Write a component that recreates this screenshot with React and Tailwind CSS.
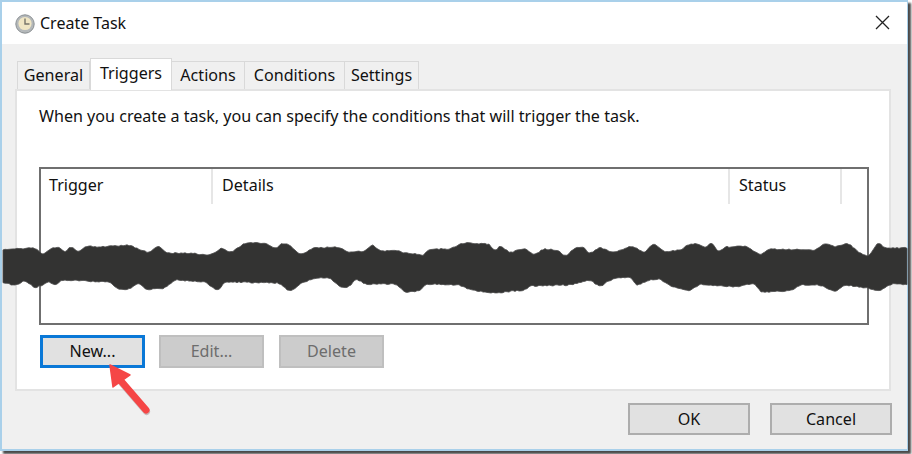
import React from 'react';

const topEdge = "3,250 8,249 35,248 43,255 52,248 60,247 64,253 71,246 79,253 85,246 100,247 130,245 140,250 150,253 158,245 167,253 190,253 205,255 215,253 222,247 230,253 245,243 265,243 275,249 282,243 290,245 300,255 313,248 340,247 347,252 365,251 372,244 380,251 395,250 405,253 425,255 428,249 450,249 462,243 490,244 495,252 500,245 510,253 524,248 535,255 543,249 558,250 565,257 575,248 583,247 590,254 600,247 612,253 632,246 645,253 653,243 665,252 680,250 690,244 700,244 705,248 712,242 718,253 725,247 745,246 760,255 770,249 815,250 825,243 835,247 848,243 860,253 868,257 878,242 885,248 908,248";
const bottomEdge = "3,282 15,286 25,280 35,288 42,285 50,281 55,287 60,280 110,282 118,290 130,289 140,282 145,290 165,288 175,280 205,282 218,291 225,282 280,283 290,292 300,284 315,278 330,278 340,287 350,287 355,278 365,284 395,284 405,292 420,291 425,284 460,285 470,290 495,293 525,290 530,286 570,285 590,280 600,287 610,280 620,278 632,277 635,286 650,280 660,279 672,287 690,291 700,284 735,287 755,283 760,292 790,291 800,285 820,285 835,292 845,285 868,288 880,291 890,284 908,285";

// resample the traced edge, round it off a little, then roughen it like torn paper
function roughen(edge, seed) {
  const pts = edge.split(' ').map((p) => p.split(',').map(Number));
  const ys = [];
  let seg = 0;
  for (let x = 3; x <= 908; x += 2) {
    while (seg < pts.length - 2 && pts[seg + 1][0] < x) seg++;
    const [x0, y0] = pts[seg];
    const [x1, y1] = pts[seg + 1];
    ys.push(y0 + ((y1 - y0) * (x - x0)) / (x1 - x0));
  }
  return ys.map((_, i) => {
    const near = ys.slice(Math.max(0, i - 1), i + 2);
    const avg = near.reduce((a, b) => a + b, 0) / near.length;
    const noise = Math.sin(i * 12.9898 + seed) * 43758.5453;
    return [3 + i * 2, (avg + (noise - Math.floor(noise)) * 1.2 - 0.6).toFixed(1)];
  });
}

const top = roughen(topEdge, 1);
const bottom = roughen(bottomEdge, 7).reverse();
const wave = [...top, ...bottom].map((p) => p.join(',')).join(' ');

const tabs = [
  { label: 'General', w: 'w-[73px]' },
  { label: 'Triggers', w: 'w-[82px]', active: true },
  { label: 'Actions', w: 'w-[74px]' },
  { label: 'Conditions', w: 'w-[101px]' },
  { label: 'Settings', w: 'w-[75px]' },
];

const columns = [
  { label: 'Trigger', w: 'w-[172px] pl-[8px]' },
  { label: 'Details', w: 'w-[517px] pl-[9px]' },
  { label: 'Status', w: 'w-[112px] pl-[9px]' },
];

function Tab({ label, w, active }) {
  if (active) {
    return (
      <div className={`${w} h-[32px] -mb-px flex items-start justify-center pt-[2px] bg-white border border-b-0 border-[#d9d9d9] z-10`}>
        {label}
      </div>
    );
  }
  return (
    <div className={`${w} h-[28px] flex items-center justify-center bg-[#f0f0f0] border border-b-0 border-[#d9d9d9] -ml-px`}>
      {label}
    </div>
  );
}

function ClockIcon() {
  return (
    <svg width="20" height="20" viewBox="0 0 20 20" className="shrink-0 mt-[2px]">
      <circle cx="10" cy="10" r="9.2" fill="#b4b8ba" stroke="#8b9093" strokeWidth="1" />
      <circle cx="10" cy="9.5" r="6.6" fill="#f0e6c4" />
      <path d="M10 4.5V10H14.5" fill="none" stroke="#77756a" strokeWidth="1.4" />
    </svg>
  );
}

export default function App() {
  return (
    <div className="w-[912px] h-[454px] relative bg-white overflow-hidden font-['Noto_Sans',sans-serif] text-[16.1px] text-[#111]">
      <div className="w-[908px] h-[451px] flex flex-col border-x border-t-2 border-b-2 border-[#a9d0ea] border-l-2 bg-[#f0f0f0] shadow-[3px_3px_2px_#4a4a4a]">
        <div className="h-[42px] shrink-0 bg-white flex items-center pl-[13px] pr-[17px] gap-[5px]">
          <ClockIcon />
          <span className="text-[16px] flex-1">Create Task</span>
          <svg width="15" height="15" viewBox="0 0 15 15" className="-mt-[1px]">
            <path d="M1 1L14 14M14 1L1 14" stroke="#222" strokeWidth="1.3" fill="none" />
          </svg>
        </div>

        <div className="flex-1 flex flex-col pl-[13px] pr-[15px]">
          <div className="flex items-end h-[45px] pl-[3px]">
            {tabs.map((t) => (
              <Tab key={t.label} {...t} />
            ))}
          </div>

          <div className="h-[302px] w-[876px] shrink-0 bg-white border-2 border-[#e3e3e3] pl-[22px] pr-[20px] flex flex-col">
            <p className="mt-[13px] h-[24px] leading-[24px] whitespace-nowrap">
              When you create a task, you can specify the conditions that will trigger the task.
            </p>
            <div className="mt-[39px] h-[158px] w-[830px] shrink-0 border-2 border-[#6f6f6f] flex items-start">
              {columns.map((c) => (
                <div key={c.label} className={`${c.w} h-[35px] pb-[2px] flex items-center border-r-2 border-[#e6e6e6]`}>
                  {c.label}
                </div>
              ))}
            </div>
            <div className="mt-[10px] flex pl-px gap-[14px]">
              <button className="w-[105px] h-[33px] bg-[#e1e1e1] border-[3px] border-[#0a78d7]">New...</button>
              <button className="w-[105px] h-[33px] bg-[#cccccc] border-2 border-[#bfbfbf] text-[#6d6d6d]">Edit...</button>
              <button className="w-[105px] h-[33px] bg-[#cccccc] border-2 border-[#bfbfbf] text-[#6d6d6d] ml-px">Delete</button>
            </div>
          </div>

          <div className="flex justify-end gap-[20px] mt-[12px]">
            <button className="w-[122px] h-[32px] bg-[#e1e1e1] border-2 border-[#adadad]">OK</button>
            <button className="w-[122px] h-[32px] bg-[#e1e1e1] border-2 border-[#adadad]">Cancel</button>
          </div>
        </div>
      </div>

      <svg width="912" height="454" viewBox="0 0 912 454" className="absolute inset-0 pointer-events-none">
        <polygon points={wave} fill="#333332" stroke="#4a4a4a" strokeWidth="0.8" />
        <path d="M121 381L146 410" stroke="#8a6a6a" strokeOpacity="0.4" strokeWidth="7" strokeLinecap="round" transform="translate(0.5 1.5)" />
        <path d="M121 381L146 410" stroke="#f54646" strokeWidth="7" strokeLinecap="round" />
        <path d="M110 365L130 375L113 387Z" fill="#f54646" stroke="#f54646" strokeWidth="1.5" strokeLinejoin="round" />
      </svg>
    </div>
  );
}
